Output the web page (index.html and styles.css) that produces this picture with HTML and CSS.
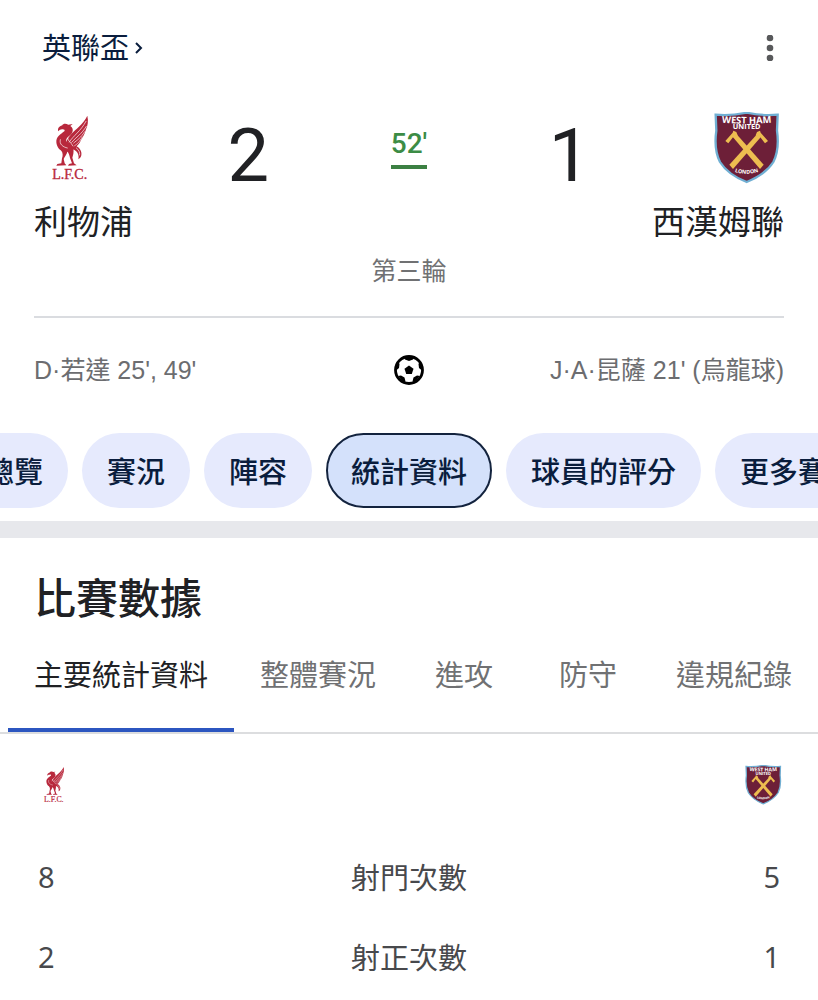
FILE: index.html
```html
<!DOCTYPE html>
<html lang="zh-Hant">
<head>
    <meta charset="UTF-8">
    <meta name="viewport" content="width=device-width, initial-scale=1">
    <title>利物浦 2 - 1 西漢姆聯</title>
    <link rel="stylesheet" href="styles.css">
</head>
<body>
    <!-- club badges, used twice each -->
    <svg class="sprite" aria-hidden="true">
        <symbol id="lfc" viewBox="12 21 216 216">
            <g fill="#b8283c">
                <path d="M84 79 L84 72 C86 66 92 63 97 61 C99 56 107 55 115 59 L128 57 L121 63 C128 67 130 74 127 82 C124 91 113 94 109 103 C107 110 110 116 116 119 L110 139 C97 145 80 130 79 112 C78 95 92 88 103 79 C106 75 102 72 96 73 L90 74 Z"/>
                <path d="M108 112 C116 92 132 79 146 66 C158 55 166 44 172 32 C176 49 173 62 168 73 C164 88 158 98 153 105 C149 115 142 124 133 129 C126 139 112 144 103 138 Z"/>
                <path d="M131 119 C148 125 157 138 154 151 C153 157 149 161 145 163 C148 149 142 137 127 133 Z"/>
                <path d="M97 132 L113 137 C110 149 104 155 101 162 L104 175 L109 181 L79 182 L82 177 L94 175 L96 160 C99 153 99 144 94 137 Z"/>
                <path d="M113 132 L130 130 C132 143 129 151 127 158 L132 175 L140 181 L114 182 L117 177 L126 175 L120 159 C119 151 116 144 111 137 Z"/>
            </g>
            <g fill="none" stroke="#fff" stroke-width="2" stroke-linecap="round">
                <path d="M118 111 C131 91 151 80 168 49"/>
                <path d="M125 112 C139 96 154 88 169 64"/>
                <path d="M131 114 C143 104 152 99 164 80"/>
                <path d="M134 122 C143 116 148 111 157 96"/>
                <path d="M91 104 C87 118 99 126 112 129"/>
                <path d="M113 100 C114 108 122 111 129 123"/>
                <path d="M139 129 C147 135 150 142 149 150"/>
            </g>
            <text x="119" y="221" text-anchor="middle" class="lfc-text">L.F.C.</text>
        </symbol>
        <symbol id="whu" viewBox="36 36 216 216">
            <path d="M47 44 Q94 48 140 38 Q186 48 233 44 L231 92 Q239 148 220 186 Q196 224 140 246 Q84 224 60 186 Q41 148 49 92 Z" fill="#6d1f38" stroke="#70afd3" stroke-width="7"/>
            <g fill="#edbd50">
                <path d="M99 112 L110 103 L191 194 L180 207 Z"/>
                <path d="M171 103 L182 112 L99 207 L88 194 Z"/>
                <path d="M76 123 L98 98 L100 92 L109 96 L113 106 L108 113 L99 112 L85 130 Z"/>
                <path d="M204 123 L182 98 L180 92 L171 96 L167 106 L172 113 L181 112 L195 130 Z"/>
            </g>
            <path id="whu-top" d="M54 67 Q140 75 226 67" fill="none"/>
            <path id="whu-bottom" d="M94 212 Q140 230 186 212" fill="none"/>
            <g class="whu-text" text-anchor="middle">
                <text class="whu-west"><textPath href="#whu-top" startOffset="50%">WEST HAM</textPath></text>
                <text class="whu-united" x="140" y="88">UNITED</text>
                <text class="whu-london"><textPath href="#whu-bottom" startOffset="50%">LONDON</textPath></text>
            </g>
        </symbol>
    </svg>

    <header class="match">
        <div class="league">
            <a class="league-link" href="#league">英聯盃<svg class="chevron" viewBox="0 0 8 14" aria-hidden="true"><path d="M1 2l5 5-5 5"/></svg></a>
            <button class="menu" type="button" aria-label="更多選項">
                <svg viewBox="0 0 8 26" aria-hidden="true"><circle cx="4" cy="3" r="3.3"/><circle cx="4" cy="13" r="3.3"/><circle cx="4" cy="23" r="3.3"/></svg>
            </button>
        </div>

        <div class="scoreline">
            <svg class="badge" role="img" aria-label="利物浦"><use href="#lfc"/></svg>
            <span class="score">2</span>
            <span class="minute">52'</span>
            <span class="score">1</span>
            <svg class="badge" role="img" aria-label="西漢姆聯"><use href="#whu"/></svg>
        </div>
        <div class="teams">
            <span>利物浦</span>
            <span>西漢姆聯</span>
        </div>
        <p class="round">第三輪</p>

        <div class="goals">
            <span>D·若達 25', 49'</span>
            <svg class="ball" viewBox="0 0 30 30" role="img" aria-label="進球">
                <circle cx="15" cy="15" r="13.5" fill="#fff" stroke="#000" stroke-width="2.8"/>
                <path d="M15 10.5l4.5 3.3-1.7 5.2h-5.6l-1.7-5.2z"/>
                <path d="M10 2l1 2.500 4 1.500 4-1.500 1-2.500zM25.500 7l-1 2 .500 4 3.500 3 .500-3zM26 21l-3-.500-3.500 2-1 4 2 1zM4 21l3-.500 3.500 2 1 4-2 1zM4.500 7l1 2-.500 4-3.500 3-.500-3z"/>
            </svg>
            <span>J·A·昆薩 21' (烏龍球)</span>
        </div>
    </header>

    <nav class="chips" aria-label="比賽">
        <button class="chip" type="button">總覽</button>
        <button class="chip" type="button">賽況</button>
        <button class="chip" type="button">陣容</button>
        <button class="chip active" type="button">統計資料</button>
        <button class="chip" type="button">球員的評分</button>
        <button class="chip" type="button">更多賽事</button>
    </nav>

    <main class="stats">
        <h1>比賽數據</h1>
        <div class="tabs" role="tablist">
            <button class="tab active" type="button" role="tab" aria-selected="true">主要統計資料</button>
            <button class="tab" type="button" role="tab">整體賽況</button>
            <button class="tab" type="button" role="tab">進攻</button>
            <button class="tab" type="button" role="tab">防守</button>
            <button class="tab" type="button" role="tab">違規紀錄</button>
        </div>
        <table>
            <thead>
                <tr>
                    <th scope="col"><svg class="badge-small" role="img" aria-label="利物浦"><use href="#lfc"/></svg></th>
                    <td></td>
                    <th scope="col"><svg class="badge-small" role="img" aria-label="西漢姆聯"><use href="#whu"/></svg></th>
                </tr>
            </thead>
            <tbody>
                <tr><td>8</td><th scope="row">射門次數</th><td>5</td></tr>
                <tr><td>2</td><th scope="row">射正次數</th><td>1</td></tr>
            </tbody>
        </table>
    </main>

    <script>
        // start with the first chip partly scrolled away
        document.querySelector('.chips').scrollLeft = 60;
    </script>
</body>
</html>
```
FILE: styles.css
```css
* {
    box-sizing: border-box;
}

body {
    margin: 0;
    background: #fff;
    color: #202124;
    font-family: "Noto Sans", "Noto Sans CJK TC", sans-serif;
    font-size: 29px;
}

button {
    border: 0;
    background: none;
    font: inherit;
    white-space: nowrap;
    cursor: pointer;
}

.sprite {
    position: absolute;
    width: 0;
    height: 0;
}

/* match header */
.match {
    padding: 24px 34px 0;
}

.league {
    display: flex;
    justify-content: space-between;
    align-items: center;
    height: 48px;
    padding: 0 8px;
}

.league-link {
    display: flex;
    align-items: center;
    gap: 6px;
    color: #0a1d3d;
    line-height: 46px;
    text-decoration: none;
}

.chevron {
    width: 8px;
    height: 14px;
    fill: none;
    stroke: #0a1d3d;
    stroke-width: 2;
}

.menu {
    padding: 0 2px;
}

.menu svg {
    display: block;
    width: 8px;
    height: 26px;
    fill: #58595b;
}

.scoreline {
    display: flex;
    justify-content: space-between;
    align-items: center;
    height: 88px;
    margin-top: 32px;
}

.badge {
    width: 72px;
    height: 72px;
}

.score {
    padding-top: 16px;
    font-family: Roboto, sans-serif;
    font-size: 74px;
    line-height: 88px;
}

.minute {
    padding-bottom: 4px;
    border-bottom: 4px solid #3c8043;
    color: #3c8c45;
    font-family: Roboto, sans-serif;
    font-size: 28px;
    font-weight: 500;
    line-height: 34px;
}

.teams {
    display: flex;
    justify-content: space-between;
    font-size: 33px;
    line-height: 48px;
    margin-top: 6px;
}

.round {
    margin: 0;
    padding: 6px 0 28px;
    border-bottom: 2px solid #dadce0;
    color: #707173;
    font-size: 25px;
    line-height: 36px;
    text-align: center;
}

.goals {
    display: grid;
    grid-template-columns: 1fr 30px 1fr;
    align-items: center;
    height: 104px;
    color: #6c6d70;
    font-family: "Liberation Sans", "Noto Sans CJK TC", sans-serif;
    font-size: 25px;
    line-height: 32px;
}

.goals span:last-child {
    text-align: right;
}

.ball {
    width: 30px;
    height: 30px;
}

/* scrolling chips */
.chips {
    display: flex;
    gap: 14px;
    padding: 11px 20px 13px;
    border-bottom: 17px solid #e7e8ec;
    overflow-x: auto;
    scrollbar-width: none;
}

.chip {
    flex: none;
    height: 75px;
    padding: 0 25px 2px;
    border-radius: 38px;
    background: #e6eafd;
    color: #0a1d3d;
    font-weight: 500;
}

.chip.active {
    padding: 0 23px 2px;
    border: 2px solid #13233e;
    background: #d4e1fb;
}

/* stats */
h1 {
    margin: 0;
    padding: 30px 34px 18px;
    font-size: 42px;
    font-weight: 500;
    line-height: 60px;
}

.tabs {
    display: flex;
    padding-left: 8px;
    border-bottom: 2px solid #dcdddf;
    overflow-x: auto;
    scrollbar-width: none;
}

.tab {
    flex: none;
    min-width: 124px;
    height: 86px;
    padding: 0 26px 28px;
    border-bottom: 4px solid transparent;
    color: #707173;
}

.tab.active {
    border-color: #2c56c0;
    color: #202124;
}

table {
    width: 100%;
    border-collapse: collapse;
    table-layout: fixed;
    color: #48494c;
}

th,
td {
    height: 80px;
    padding: 0 38px;
    font-weight: 400;
    text-align: center;
}

thead th,
thead td {
    height: 102px;
    padding: 0 34px;
}

th:first-child,
td:first-child {
    text-align: left;
}

th:last-child,
td:last-child {
    text-align: right;
}

.badge-small {
    display: block;
    width: 40px;
    height: 40px;
}

th:last-child .badge-small {
    margin-left: auto;
}

/* badge lettering */
.lfc-text {
    fill: #b8283c;
    stroke: #b8283c;
    font: 42px "Liberation Serif", serif;
}

.whu-text {
    fill: #fff;
    font-family: "Open Sans", sans-serif;
    font-weight: 700;
}

.whu-west {
    font-size: 28px;
}

.whu-united {
    font-size: 22px;
}

.whu-london {
    font-size: 16px;
}
```
